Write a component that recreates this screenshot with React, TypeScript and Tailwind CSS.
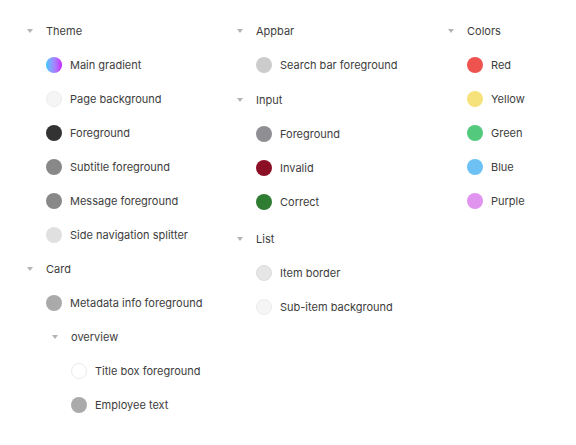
import type { ReactNode } from 'react';

type Leaf = { label: string; swatch: string };

function Caret() {
  return (
    <svg width="6" height="4" viewBox="0 0 6 4" className="shrink-0">
      <path d="M0 0 L6 0 L3 4 Z" fill="#b4b4b4" />
    </svg>
  );
}

function Group({ title, children }: { title: string; children: ReactNode }) {
  return (
    <div>
      <div className="flex items-center h-[34px] pl-[6px]">
        <Caret />
        <span className="ml-[13px]">{title}</span>
      </div>
      <div className="pl-[25px]">{children}</div>
    </div>
  );
}

function Item({ label, swatch }: Leaf) {
  return (
    <div className="flex items-center h-[34px]">
      <span className={`w-4 h-4 rounded-full shrink-0 ${swatch}`} />
      <span className="ml-2">{label}</span>
    </div>
  );
}

const THEME: Leaf[] = [
  { label: 'Main gradient', swatch: 'bg-gradient-to-r from-[#1cc8ff] to-[#c800ff]' },
  { label: 'Page background', swatch: 'bg-[#f5f5f5] border border-[#ebebeb]' },
  { label: 'Foreground', swatch: 'bg-[#333333]' },
  { label: 'Subtitle foreground', swatch: 'bg-[#888888]' },
  { label: 'Message foreground', swatch: 'bg-[#888888]' },
  { label: 'Side navigation splitter', swatch: 'bg-[#e0e0e0]' },
];

const INPUT: Leaf[] = [
  { label: 'Foreground', swatch: 'bg-[#8e8e93]' },
  { label: 'Invalid', swatch: 'bg-[#8b1026]' },
  { label: 'Correct', swatch: 'bg-[#2e7d32]' },
];

const LIST: Leaf[] = [
  { label: 'Item border', swatch: 'bg-[#e6e6e6] border border-[#dcdcdc]' },
  { label: 'Sub-item background', swatch: 'bg-[#f5f5f5] border border-[#ebebeb]' },
];

const COLORS: Leaf[] = [
  { label: 'Red', swatch: 'bg-[#ef5350]' },
  { label: 'Yellow', swatch: 'bg-[#f5e27a]' },
  { label: 'Green', swatch: 'bg-[#52c97d]' },
  { label: 'Blue', swatch: 'bg-[#6ec1f5]' },
  { label: 'Purple', swatch: 'bg-[#e093ef]' },
];

export default function App() {
  return (
    <div
      className="w-[576px] h-[445px] bg-white text-[11px] text-[#3d3d3d] pl-[21px] pt-[14px] flex"
      style={{ fontFamily: 'Inter, "Noto Sans", sans-serif' }}
    >
      <div className="w-[210px]">
        <Group title="Theme">
          {THEME.map(i => <Item key={i.label} {...i} />)}
        </Group>
        <Group title="Card">
          <Item label="Metadata info foreground" swatch="bg-[#aaaaaa]" />
          <Group title="overview">
            <Item label="Title box foreground" swatch="bg-white border border-[#ebebeb]" />
            <Item label="Employee text" swatch="bg-[#aaaaaa]" />
          </Group>
        </Group>
      </div>
      <div className="w-[211px]">
        <Group title="Appbar">
          <Item label="Search bar foreground" swatch="bg-[#cccccc]" />
        </Group>
        <div className="mt-[1px]">
          <Group title="Input">
            {INPUT.map(i => <Item key={i.label} {...i} />)}
          </Group>
        </div>
        <div className="mt-[3px]">
          <Group title="List">
            {LIST.map(i => <Item key={i.label} {...i} />)}
          </Group>
        </div>
      </div>
      <div>
        <Group title="Colors">
          {COLORS.map(i => <Item key={i.label} {...i} />)}
        </Group>
      </div>
    </div>
  );
}
